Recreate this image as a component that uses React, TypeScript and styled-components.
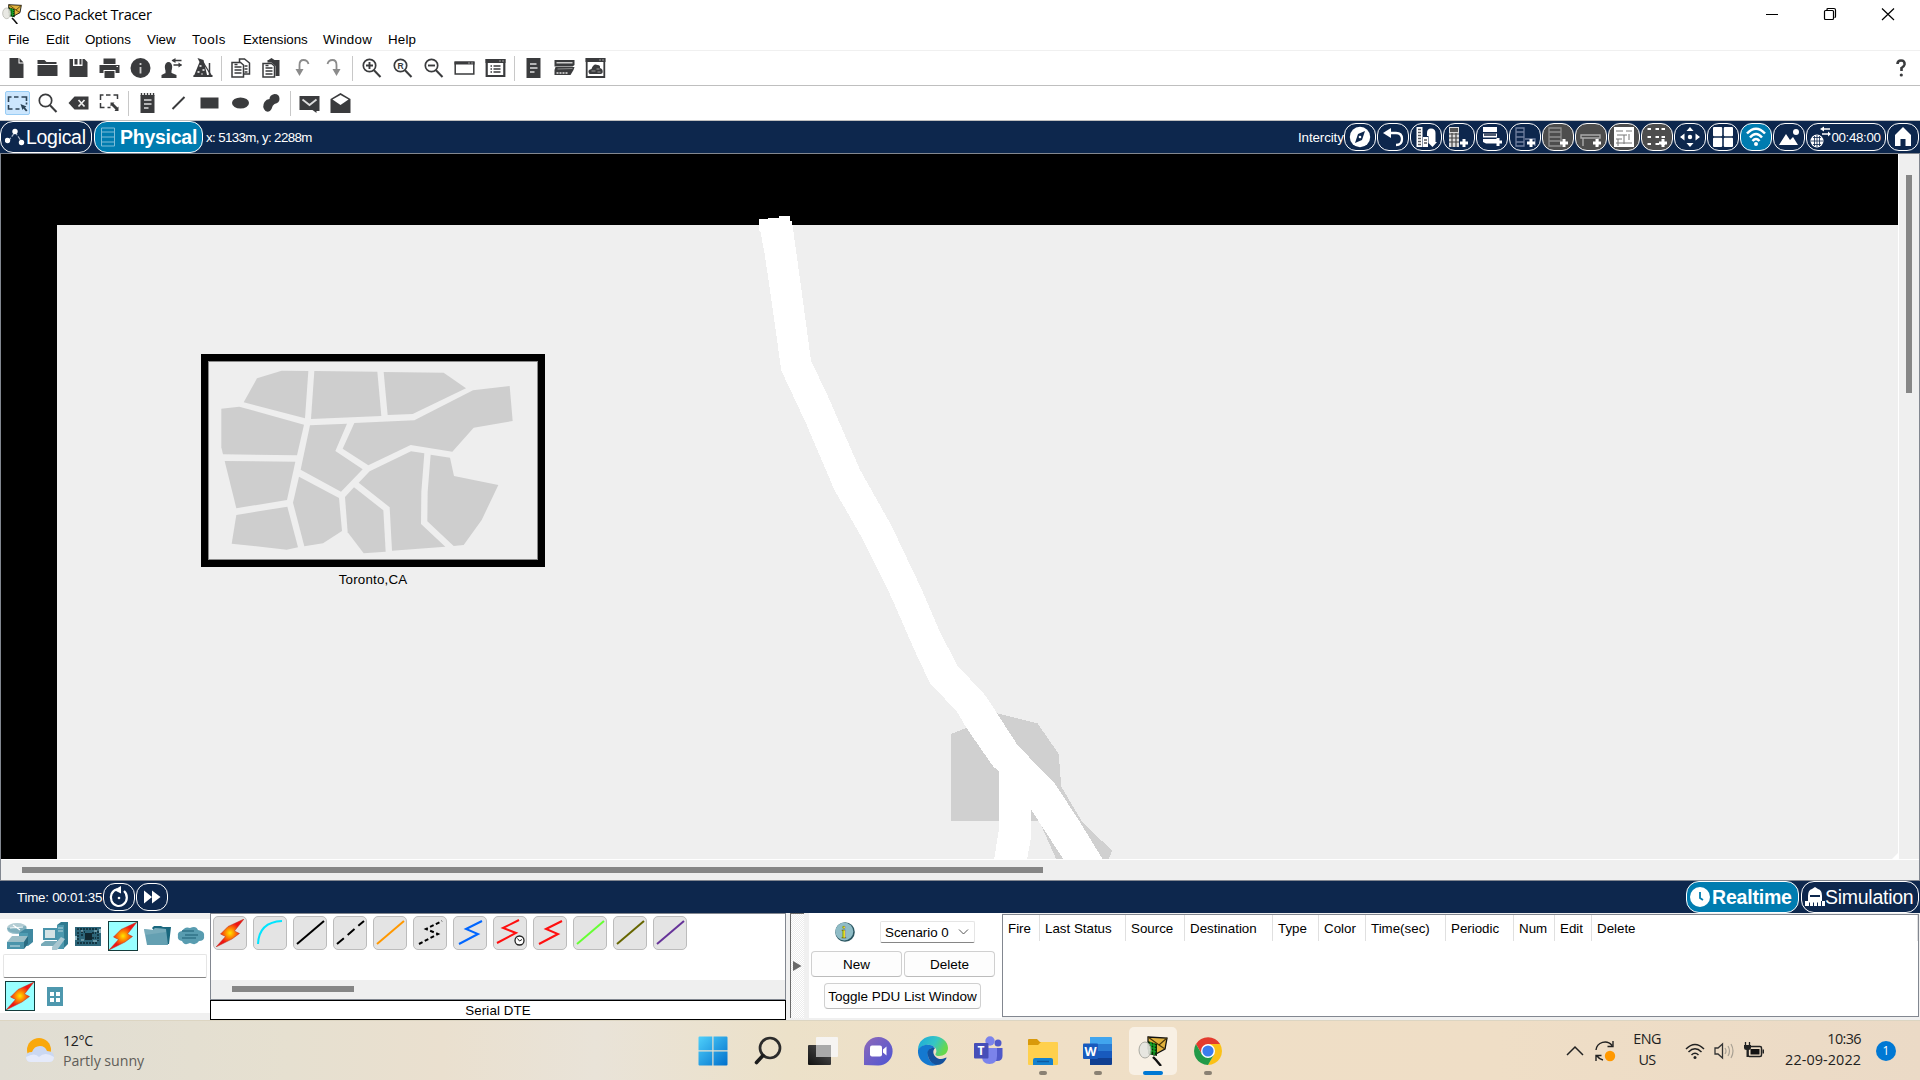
import React from "react";
import styled, { createGlobalStyle } from "styled-components";

const navy = "#0d274d";
const ink = "#3a3b3d";
const teal = "#007cb0";

const Global = createGlobalStyle`
  * { box-sizing: border-box; }
  html, body { margin: 0; padding: 0; overflow: hidden; }
  body { font-family: "Liberation Sans", Arial, sans-serif; font-size: 13.33px; color: #000; }
  svg { display: block; flex: none; }
`;

const Screen = styled.div`
  width: 1920px; height: 1080px; display: flex; flex-direction: column; background: #fff; overflow: hidden;
`;
const TitleBar = styled.header`
  height: 28px; display: flex; align-items: center; padding: 0 24px 0 2px; gap: 5px; flex: none;
`;
const Title = styled.span`
  font: 14.6px "Open Sans", "Noto Sans", sans-serif; letter-spacing: -0.36px; flex: 1; white-space: nowrap;
`;
const WindowButtons = styled.div`display: flex; gap: 42px; align-items: center;`;
const MenuBar = styled.nav`
  height: 23px; display: flex; align-items: center; padding: 2px 0 0 8px; gap: 16px; border-bottom: 1px solid #f0f0f0; flex: none;
`;
const MenuItem = styled.span<{ $w: number; $ls: number }>`
  width: ${p => p.$w}px; white-space: nowrap; letter-spacing: ${p => p.$ls}px; line-height: 16px;
`;
const ToolBar = styled.div<{ $pl: number }>`
  height: 35px; display: flex; align-items: center; border-bottom: 1px solid #bfbfbf; padding: 0 4px 0 ${p => p.$pl}px; flex: none;
`;
const Tool = styled.div<{ $on?: boolean }>`
  width: 25px; height: 24px; margin: 0 ${p => (p.$on ? 2 : 3)}px 0 3px; display: flex; align-items: center; justify-content: center;
  border-radius: 2px; border: 1px solid ${p => (p.$on ? "#99cdf5" : "transparent")};
  background: ${p => (p.$on ? "#cce6fd" : "transparent")};
`;
const ToolSep = styled.div`width: 1px; height: 25px; margin: 0 3px; background: #c8c8c8;`;
const Spring = styled.div`flex: 1;`;
const Gap = styled.div<{ $w: number }>`flex: 0 0 ${p => p.$w}px;`;

const NavBar = styled.div`
  height: 32px; background: ${navy}; color: #fff; display: flex; align-items: center; flex: none;
`;
const ModeButton = styled.div<{ $w: number; $on?: boolean; $pl?: number }>`
  width: ${p => p.$w}px; height: 32px; border: 1px solid #fff; border-radius: 13px; display: flex; align-items: center;
  padding: 0 0 0 ${p => p.$pl ?? 4}px; white-space: nowrap; background: ${p => (p.$on ? teal : navy)};
  font-size: 19.5px; font-weight: ${p => (p.$on ? 700 : 400)};
`;
const Round = styled.div<{ $w?: number; $bg?: string }>`
  width: ${p => p.$w || 32}px; height: 28px; border: 1px solid #fff; border-radius: 12px; margin-right: 1px;
  display: flex; align-items: center; justify-content: center; background: ${p => p.$bg || navy}; overflow: hidden;
`;
const NavText = styled.span<{ $w: number; $ls?: number }>`
  width: ${p => p.$w}px; white-space: nowrap; letter-spacing: ${p => p.$ls || 0}px; color: #fff;
`;

const Workspace = styled.main`
  height: 728px; border: 1px solid #828790; background: #efefef; display: grid; flex: none;
  grid-template-columns: 1897px 1fr; grid-template-rows: 705px 1fr;
`;
const Canvas = styled.div`position: relative; background: #000; overflow: hidden;`;
const City = styled.div`
  position: absolute; left: 200px; top: 200px; width: 344px; height: 213px; border: 7px solid #000; background: #eee;
`;
const CityLabel = styled.div`
  position: absolute; left: 200px; top: 418px; width: 344px; text-align: center; letter-spacing: 0.2px;
`;
const VScroll = styled.div`border-left: 1px solid #fff; display: flex; padding: 21px 0 0 7px;`;
const VThumb = styled.div`width: 6px; height: 218px; background: #868686;`;
const HScroll = styled.div`grid-column: 1 / 3; border-top: 1px solid #fff; padding: 7px 0 0 21px;`;
const HThumb = styled.div<{ $w: number }>`width: ${p => p.$w}px; height: 6px; background: #868686;`;

const Bottom = styled.section`height: 107px; display: flex; background: #f0f0f0; flex: none;`;
const Palette = styled.div`
  width: 210px; height: 94px; margin-top: 6px; background: #fff; display: flex; flex-direction: column;
`;
const PaletteRow = styled.div<{ $pl: number; $gap: number }>`
  display: flex; align-items: center; height: 34px; padding-left: ${p => p.$pl}px; gap: ${p => p.$gap}px;
`;
const SearchField = styled.div`
  height: 24px; margin: 1px 3px 1px; border: 1px solid #e5e5e5; border-bottom: 1px solid #868686; border-radius: 2px;
`;
const BoltBox = styled.div`
  width: 30px; height: 30px; border: 1px solid #133c3c; background: #99ffff; display: flex; align-items: center; justify-content: center;
`;
const Center = styled.div`width: 576px; display: flex; flex-direction: column;`;
const Cables = styled.div`
  height: 87px; border: 1px solid #828790; background: #fff; display: flex; flex-direction: column;
`;
const CableRow = styled.div`display: flex; gap: 6px; padding: 2px; flex: 1;`;
const Cable = styled.div`
  width: 34px; height: 34px; border: 1px solid #bcbcbc; border-radius: 5px; background: #e4e4e4;
  display: flex; align-items: center; justify-content: center;
`;
const CableScroll = styled.div`height: 19px; background: #efefef; padding: 6px 0 0 21px;`;
const CableName = styled.div`
  height: 20px; border: 1px solid #000; background: #fff; text-align: center; line-height: 19px; letter-spacing: 0.1px;
`;
const Splitter = styled.div`
  width: 14px; height: 105px; margin: 0 5px 0 4px; border-left: 1px solid #696969; border-top: 1px solid #696969;
  background: repeating-conic-gradient(#fff 0 25%, #ececec 0 50%) 0 0 / 2px 2px; display: flex; align-items: center; padding-left: 2px;
`;
const Scenario = styled.div`
  width: 193px; height: 105px; background: #fff; display: flex; flex-direction: column; padding: 8px 5px 0 2px;
`;
const ScenarioTop = styled.div`height: 22px; display: flex; align-items: center; padding-left: 24px; gap: 25px; margin-bottom: 8px;`;
const Combo = styled.div`
  width: 95px; height: 22px; border: 1px solid #e5e5e5; border-bottom-color: #868686; border-radius: 2px;
  display: flex; align-items: center; justify-content: space-between; padding: 0 5px 0 4px; white-space: nowrap;
`;
const Buttons = styled.div`display: flex; gap: 2px;`;
const Push = styled.button<{ $w: number }>`
  width: ${p => p.$w}px; height: 26px; border: 1px solid #d0d0d0; border-bottom-color: #bcbcbc; border-radius: 4px; background: #fdfdfd;
  font: 13.5px "Liberation Sans", Arial, sans-serif; padding: 0; white-space: nowrap; color: #000;
`;
const ToggleRow = styled.div`display: flex; padding: 6px 0 0 13px;`;
const PduTable = styled.div`
  width: 917px; height: 103px; margin-top: 1px; background: #fff; border: 1px solid #828790; display: flex;
`;
const PduHead = styled.div<{ $w: number; $ls?: number }>`
  width: ${p => p.$w}px; height: 26px; border-right: 1px solid #e0e0e0; padding: 6px 0 0 5px; white-space: nowrap; letter-spacing: ${p => p.$ls || 0}px;
`;

const TaskBar = styled.footer`
  height: 60px; display: flex; align-items: center; position: relative; flex: none; border-top: 1px solid #dcd5c2;
  background: linear-gradient(90deg, #e0ddd3 0, #e6e0d0 15%, #eae0cf 23%, #e9e3d8 31%, #ece1c9 41%, #efdfc6 52%, #efdec6 78%, #ebdac6 100%);
  font-family: "Open Sans", "Noto Sans", sans-serif; color: #1f1f1f;
`;
const Weather = styled.div`display: flex; align-items: center; padding-left: 25px; gap: 8px; width: 689px;`;
const WeatherText = styled.div`
  font-size: 14.2px; line-height: 20px; letter-spacing: -0.35px; span { display: block; color: #5f5d58; letter-spacing: -0.04px; }
`;
const Apps = styled.div`display: flex; gap: 7px; width: 560px;`;
const AppTile = styled.div<{ $on?: boolean }>`
  width: 48px; height: 48px; border-radius: 5px; background: ${p => (p.$on ? "#f8f0e4" : "transparent")};
  display: flex; flex-direction: column; align-items: center; padding-top: 9px; gap: 5px;
`;
const Dot = styled.div<{ $on?: boolean }>`
  width: ${p => (p.$on ? 20 : 8)}px; height: 4px; border-radius: 2px; background: ${p => (p.$on ? "#0078d4" : "#8a8173")};
`;
const Tray = styled.div`display: flex; align-items: center; flex: 1; padding-right: 24px; justify-content: flex-end;`;
const TrayText = styled.div<{ $w: number; $align: string }>`
  width: ${p => p.$w}px; text-align: ${p => p.$align}; font-size: 14.4px; line-height: 20.5px; letter-spacing: -0.6px;
  white-space: nowrap; padding-bottom: 2px;
`;
const DateLine = styled.span`display: block; letter-spacing: 0.08px;`;
const Badge = styled.div`
  width: 20px; height: 20px; border-radius: 50%; background: #0078d4; color: #fff; font-size: 12px; line-height: 20px; text-align: center; margin-left: 15px;
`;

type IcoProps = { w?: number; h?: number; children: React.ReactNode; color?: string };
/* Icons are drawn around their own centre. */
const Ico = ({ w = 22, h = 22, children, color = ink }: IcoProps) => (
  <svg width={w} height={h} viewBox={`${-w / 2} ${-h / 2} ${w} ${h}`} fill={color}>{children}</svg>
);

const PacketLogo = ({ size = 28 }: { size?: number }) => (
  <svg width={size} height={size} viewBox="0 0 28 30">
    <path d="M9 1L28 2L26 13L15 19L9 13Z" fill="#e2b23c" stroke="#111" strokeWidth="1.3" />
    <path d="M9 1L20 9L28 2M20 9L26 13" fill="none" stroke="#4a3608" strokeWidth="1.2" />
    <path d="M9 5L18 8V20L9 18Z" fill="#0a2d08" />
    <path d="M10 8l7 2M10 11l7 2M10 14l7 2M12 6v12M15 7v12" stroke="#17b32b" strokeWidth="1.3" />
    <ellipse cx="6" cy="14" rx="6" ry="8" fill="#e6e6e0" stroke="#a3a39b" opacity=".9" />
    <path d="M14 21l3 3 5 6" stroke="#111" strokeWidth="2.4" fill="none" />
  </svg>
);

const Bolt = () => (
  <svg width="28" height="28" viewBox="0 0 28 28">
    <defs>
      <radialGradient id="spark">
        <stop offset="0" stopColor="#ffe600" /><stop offset=".3" stopColor="#ff8f00" /><stop offset=".75" stopColor="#f01414" />
      </radialGradient>
    </defs>
    <path d="M28 0L18.5 12L23.5 14.500L16 20L0 28L9.500 17.500L4.500 15L12 7.500Z" fill="url(#spark)" stroke="#b83222" strokeWidth=".5" />
  </svg>
);

const lens = (
  <><circle cx="-2" cy="-2.5" r="6.2" fill="none" stroke={ink} strokeWidth="1.7" /><path d="M2.5 2.2L9 9" stroke={ink} strokeWidth="2" /></>
);
const page = (
  <><path d="M-7 -10H2V-4.500H7V10H-7Z" /><path d="M3 -10L7 -5.500H3Z" /></>
);
const mainTools: (React.ReactNode | null)[] = [
  page,
  <><path d="M-10 -8H-3L-1 -6H9V-4H-10Z" /><path d="M-10 -3H10V8H-10Z" /></>,
  <><path d="M-9 -9H-5.500V-2H4V-9H6L9 -6V9H-9Z" /><path d="M-4 -9H-1V-3.500H-4ZM1 -9H3V-3.500H1Z" /></>,
  <><path d="M-6 -9.500H6V-4H-6ZM-10 -3H10V5H6V2H-6V5H-10Z" /><path d="M-5 3H5V10H-5Z" /><path d="M7 -1.500h1.500" stroke="#fff" /></>,
  <><circle r="10" /><path d="M0 -5v2M0 -1v6.500" stroke="#ccc" strokeWidth="1.800" /></>,
  <><ellipse cx="-3" cy="-1" rx="3.700" ry="5" /><path d="M-10 10V7L-5 4.500H-1L5 7V10ZM-6 1h6v6h-6Z" /><path d="M1 -7.500H10M2 -3H10" stroke={ink} strokeWidth="1.500" /><path d="M4 -10V-5L0 -7.500ZM7 -5.500V-.5L10.500 -3Z" /></>,
  <><path d="M-5 -10L1 -8L5 9H-9L-3 -6Z" /><path d="M-9 7H10V9H-9Z" /><path d="M1 -5L9 8" stroke={ink} strokeWidth="1.300" /><path d="M7 -5V8" stroke={ink} strokeWidth="1.500" /><path d="M-3 -2h2M0 2h2M-5 4h2M-1 6h1" stroke="#fff" strokeWidth="1.500" /></>,
  null,
  <><path d="M-1 -9H4L9 -5V6H-1Z" fill="#fff" stroke={ink} strokeWidth="1.500" /><path d="M-8.500 -5.500H0L3 -3V9H-8.500Z" fill="#fff" stroke={ink} strokeWidth="1.500" /><path d="M-6 -1H1M-6 2H1M-6 5H1M4 -2H7M4 1H7M4 4H7M-6 -3.500h3" stroke={ink} strokeWidth="1.300" /></>,
  <><path d="M-3 -8L0 -10L3 -8H8V8H4V-2L0 -5.500H-4V-8Z" /><path d="M-8.500 -4.500H0L3 -2V9H-8.500Z" fill="#fff" stroke={ink} strokeWidth="1.500" /><path d="M-6 0H1M-6 3H1M-6 6H1M-6 -2.500h3" stroke={ink} strokeWidth="1.300" /></>,
  <><path d="M6 -4Q5 -8 1 -8Q-3 -8 -3 -3V3" fill="none" stroke="#8b8b8b" strokeWidth="1.800" /><path d="M-7 1H1L-3 8Z" fill="#8b8b8b" /></>,
  <><path d="M-6 -4Q-5 -8 -1 -8Q3 -8 3 -3V3" fill="none" stroke="#8b8b8b" strokeWidth="1.800" /><path d="M-1 1H7L3 8Z" fill="#8b8b8b" /></>,
  null,
  <>{lens}<path d="M-5.500 -2.500H1.500M-2 -6V1" stroke={ink} strokeWidth="1.900" /></>,
  <>{lens}<text x="-5" y="0.500" fontSize="8.500" fontWeight="700" fontFamily="Liberation Sans">R</text></>,
  <>{lens}<path d="M-5.500 -2.500H1.500" stroke={ink} strokeWidth="1.900" /></>,
  <><path d="M-9.300 -5.800H9.300V6H-9.300Z" fill="none" stroke={ink} strokeWidth="1.500" /><path d="M-10 -6.500H10V-3.500H-10Z" /><path d="M4 -5h1M7 -5h1" stroke="#fff" /></>,
  <><path d="M-8.800 -7.800H8.800V8H-8.800Z" fill="none" stroke={ink} strokeWidth="2.200" /><path d="M-10 -9H10V-5H-10Z" /><path d="M4 -7h1M7 -7h1" stroke="#fff" /><path d="M-5 -2h1.500M-2 -2H5M-5 1h1.500M-2 1H5M-5 4h1.500M-2 4H5" stroke={ink} strokeWidth="1.500" /></>,
  null,
  <><path d="M-7 -10H7V10H-7Z" /><path d="M-3.500 -4H3M-3.500 0H4M-3.500 4H1" stroke="#ddd" strokeWidth="1.600" /></>,
  <><path d="M-10 -8H10V-3L8 -1.500H-10Z" /><path d="M-8 -6H8V-4.500H-8Z" fill="#ccc" /><path d="M-9 -1H10L9 2L6 7H-10V2Z" /><path d="M-8 5h2M-5 5h2M-2 5h2M1 5h2" stroke="#bbb" strokeWidth="2" /><path d="M-7 1L8 .5" stroke="#888" /></>,
  <><path d="M-8.800 -8.800H8.800V9H-8.800Z" fill="#fff" stroke={ink} strokeWidth="1.800" /><path d="M-10 -10H10V-6H-10Z" /><path d="M4 -8h1M7 -8h1" stroke="#fff" /><path d="M-6 6Q-9 2 -4 1Q-2 -5 2 -3Q5 -3 4.500 0Q8 1 7 5Q6 6 5 6Z" /><path d="M-4 3h4M1 1h3M2 4h3" stroke="#999" strokeWidth="1.200" /></>,
];
const drawTools: (React.ReactNode | null)[] = [
  <><path d="M-9 -1V-6H-6M-3.500 -6H1M4 -6H9V-2M-9 2V6H-5M-2 6H2M9 -.5V1.500" fill="none" stroke="#2c4356" strokeWidth="1.600" /><path d="M3 1L9 3.500L7.500 4.500L10 7.500L8.500 8.500L6 5.500L5 7Z" fill="#2c4356" /></>,
  lens,
  <><path d="M-10 0L-4 -6.500H10V6.500H-4Z" /><path d="M0 -3L6 3.500M6 -3L0 3.500" stroke="#eee" strokeWidth="1.700" /></>,
  <><path d="M-9 -3V-8H-6M-3.500 -8H1M4 -8H8V-4M-9 0V4.500H-5M-2 4.500H1" fill="none" stroke={ink} strokeWidth="1.500" /><path d="M1 -.5H5L4 .5L8 4.500L9 3.500V8H5L6 6.500L2 2.500L1 3.500Z" /></>,
  null,
  <><path d="M-7 -8H7V10H-7Z" /><path d="M-6 -10v3M-3 -10v3M0 -10v3M3 -10v3M6 -10v3" stroke={ink} strokeWidth="1.400" /><path d="M-3.500 -3H4M-3.500 1H4M-3.500 5H1" stroke="#ddd" strokeWidth="1.500" /></>,
  <path d="M-6 6L6 -6" stroke={ink} strokeWidth="2" />,
  <path d="M-9 -5.500H9V5.500H-9Z" />,
  <ellipse rx="8.500" ry="5.500" />,
  <path d="M3 -9Q8 -9 8 -4Q8 0 3 1Q1 2 0 6Q-2 10 -6 8Q-10 4 -7 -1Q-5 -4 -2 -4Q-2 -8 3 -9Z" />,
  null,
  <><path d="M-10 -7H10V8H7V10L3 7H-10Z" /><path d="M-7 -3.500L0 2L7 -3.500" fill="none" stroke="#ddd" strokeWidth="1.800" /></>,
  <><path d="M-10 10V-4L0 -10L10 -4V10Z" /><path d="M-8 -3.500L0 -8L8 -3.500L0 2Z" fill="#fff" /></>,
];

const plus = (x: number, y: number) => <path d={`M${x - 4} ${y}h8M${x} ${y - 4}v8`} stroke="#fff" strokeWidth="3" />;
const navTools: { bg?: string; art: React.ReactNode }[] = [
  { art: <><circle r="10.200" /><path d="M5 -6L2 3L-5 6L-2 -3Z" fill={navy} /><circle r="1.300" fill="#fff" /></> },
  { art: <><path d="M-3 -4H3Q9 -4 9 2Q9 8 3 8" fill="none" stroke="#fff" strokeWidth="2.300" /><path d="M-10 -4L-2 -9V1Z" /></> },
  { art: <><path d="M-9.500 -10H-3.500V10H-9.500ZM-3 0H2V10H-3Z" /><path d="M-8 -7.500h3M-8 -4.500h3M-8 -1.500h3M-8 1.500h3M-8 4.500h3M-8 7.500h3M-2 3h3M-2 6h3" stroke="#55585f" strokeWidth="1.300" /><path d="M1 -1V-4Q1 -8.500 5 -8.500Q9.500 -8.500 9.500 -4V5H11L6.500 10L2.500 6V-1Z" /></> },
  { art: <><path d="M-10 -10H0V10H-10Z" fill="#ddd" /><path d="M-9 -9H-1V-5H-9Z" fill="#555" /><path d="M-10 -3H0M-10 1H0M-10 5H0M-7 -4V10M-3 -4V10" stroke="#444" strokeWidth="1.200" />{plus(5, 6)}</> },
  { art: <><path d="M-9 -10H5V-5H-9ZM-9 -3.500H5V.5H-9ZM-9 2H5V5H-9Z" /><path d="M-8 -4H4V-1H-8Z" fill="#4d5a70" /><path d="M-9 5H2V6.500H-6Z" />{plus(6, 5)}</> },
  { art: <><path d="M-9 -9H-1V9H-9ZM-9 -5H-1M-9 0H-1M-9 5H-1M0 2H10V9" fill="none" stroke="#7181a0" strokeWidth="1.300" />{plus(6, 6)}</> },
  { bg: "#4d4d4d", art: <><path d="M-9 -9H3V9H-9ZM-9 -5H3M-9 0H3M-9 4H3" fill="none" stroke="#8e8e8e" strokeWidth="1.300" />{plus(6, 6)}</> },
  { bg: "#4d4d4d", art: <><path d="M-10 -2H9V1H-10ZM-8 1V9M7 1V9" fill="none" stroke="#aaa" strokeWidth="1.400" />{plus(6, 6)}</> },
  { bg: "#4d4d4d", art: <><path d="M-10 -10H10V10H-10Z" /><path d="M-8 -6H-1M2 -6H8M-7 -2H3M5 -3V3M-8 2H-2M0 -2V7M-8 6H8M-6 2V9" stroke="#777" /></> },
  { bg: "#4d4d4d", art: <>{[-8, 0, 6].map(x => [-8, 0, 7].map(y => <rect key={`${x}${y}`} x={x - 1.5} y={y - 1} width="3.500" height="2" />))}{plus(6, 6)}</> },
  { art: <><path d="M0 -10L3.500 -6H-3.500ZM0 10L3.500 6H-3.500ZM-10 0L-5.500 -3.500V3.500ZM10 0L5.500 -3.500V3.500Z" /><circle r="2.200" /></> },
  { art: <><rect x="-10" y="-10" width="9.200" height="9.200" rx="1" /><rect x=".8" y="-10" width="9.200" height="9.200" rx="1" /><rect x="-10" y=".8" width="9.200" height="9.200" rx="1" /><rect x=".8" y=".8" width="9.200" height="9.200" rx="1" /></> },
  { bg: teal, art: <><path d="M-9 -3.500Q0 -13 9 -3.500M-6 .5Q0 -6.500 6 .5M-3.500 4Q0 0 3.500 4" fill="none" stroke="#fff" strokeWidth="2.500" /><circle cy="7" r="2" /></> },
  { art: <><path d="M-10 8L-3 -3L1 3L4 0L9 8Z" /><circle cx="7" cy="-5" r="3" /></> },
];

const Router = () => (
  <svg width="29" height="28" viewBox="0 0 29 28">
    <ellipse cx="11" cy="6" rx="10" ry="5" fill="#b2ccd3" /><path d="M1 6Q1 12 11 12Q20 12 20 6V4Z" fill="#6aa3b3" opacity=".7" />
    <path d="M4 6L17 5M7 3L14 8" stroke="#fff" strokeWidth="1.200" />
    <path d="M13 11L19 7H27V20L22 24H13Z" fill="#3f88a0" /><path d="M13 11H22V24H13Z" fill="#4f9cb2" />
    <path d="M1 20L6 14H22L18 20Z" fill="#9dbfc8" /><path d="M1 20H18V27H1Z" fill="#4a94ab" /><path d="M18 20L22 14V22L18 27Z" fill="#2a6c82" /><path d="M4 24h10" stroke="#cfe2e8" />
  </svg>
);
const Pc = () => (
  <svg width="28" height="28" viewBox="0 0 28 28">
    <path d="M16 3L20 0H27V22L22 27H16Z" fill="#2f7a90" /><path d="M16 3H23V27H16Z" fill="#4b98ae" /><path d="M17 6h5M17 9h5" stroke="#bcd6dd" />
    <path d="M2 6H16V18H2Z" fill="#4a94ab" /><path d="M4 8H14V16H4Z" fill="#d5e3e5" /><path d="M0 22L4 19H19L16 24H0Z" fill="#78aab8" />
    <path d="M11 25L20 15L24 17L16 28H11Z" fill="#a9c7d0" />
  </svg>
);
const Board = () => (
  <svg width="27" height="21" viewBox="0 0 27 21">
    <path d="M0 1H26V20H0Z" fill="#2d6579" /><path d="M2 3h20M2 17h21M3 6v9M23 5v10M6 6h4M6 9h3M17 7h4M17 12h4" stroke="#133542" strokeWidth="1.800" strokeDasharray="2 1" />
    <path d="M6 5h2M18 15h4M19 5h3M6 14h3" stroke="#a5c8d2" /><path d="M10 7H17V14H10Z" fill="#112730" /><path d="M25 3v4M1 10v4" stroke="#92b9c4" strokeWidth="2" />
  </svg>
);
const Folder = () => (
  <svg width="27" height="20" viewBox="0 0 27 20">
    <path d="M8 2L10 0H17L19 1H27L25 18H20Z" fill="#19677e" /><path d="M0 3L9 4L11 2L22 3L24 19H3Z" fill="#64a0b2" /><path d="M0 3L9 4L11 2L22 3L22 6L1 9Z" fill="#8cb8c4" opacity=".5" />
  </svg>
);
const CloudIco = () => (
  <svg width="28" height="20" viewBox="0 0 28 20">
    <path d="M5 15Q0 14 1 10Q0 6 5 5Q8 0 13 2Q19 -1 21 4Q28 5 27 10Q28 15 22 15Q19 20 13 17Q7 20 5 15Z" fill="#589cb0" />
    <path d="M5 5h12M8 9h13M5 12h14" stroke="#317388" strokeWidth="1.400" />
  </svg>
);
const Mods = () => (
  <svg width="16" height="19" viewBox="0 0 16 19"><path d="M0 0H16V19H0Z" fill="#4e98ae" />
    <path d="M3 5H7V9H3ZM9 5H13V9H9ZM3 11H7V15H3ZM9 11H13V15H9Z" fill="#fff" /></svg>
);

const cables: React.ReactNode[] = [
  <path key="c" d="M4 28Q5 6 28 5" stroke="#00e5ff" />,
  <path key="s" d="M3 28L30 5" stroke="#000" />,
  <path key="x" d="M3 28L30 5" stroke="#000" strokeDasharray="9 5" />,
  <path key="f" d="M3 28L30 5" stroke="#ff9800" />,
  <path key="p" d="M5 28L24 18L12 13L28 5" stroke="#000" strokeDasharray="4 2.500" />,
  <path key="b" d="M5 28L24 18L12 13L28 5" stroke="#0066ff" />,
  <g key="r"><path d="M3 27L22 17L9 12L25 4" stroke="#ff0f0f" /><circle cx="25.500" cy="24.500" r="4.500" fill="#fff" stroke="#222" strokeWidth="1.300" /><path d="M23.500 22.500L25.500 25L28 23.500" stroke="#222" strokeWidth="1" /></g>,
  <path key="r2" d="M5 28L24 18L12 13L28 5" stroke="#ff0f0f" />,
  <path key="g" d="M3 28L30 5" stroke="#66ff33" />,
  <path key="o" d="M3 28L30 5" stroke="#666600" />,
  <path key="v" d="M3 28L30 5" stroke="#663399" />,
];

const heads: [string, number][] = [
  ["Fire", 37], ["Last Status", 86], ["Source", 59], ["Destination", 88], ["Type", 46], ["Color", 47],
  ["Time(sec)", 80], ["Periodic", 68], ["Num", 41], ["Edit", 37], ["Delete", 326],
];
const menus: [string, number, number][] = [
  ["File", 22, 0], ["Edit", 23, 0.1], ["Options", 46, 0], ["View", 29, 0], ["Tools", 35, 0.6],
  ["Extensions", 64, -0.05], ["Window", 49, 0.3], ["Help", 30, 0.2],
];

const blocks = [
  "191,187 231,115 305,92 385,93 375,235", "403,93 592,95 604,228 393,237", "611,96 791,98 858,145 698,222 623,225",
  "124,206 178,200 372,254 351,346 129,343 124,322", "134,363 346,365 321,480 169,505",
  "169,525 322,500 354,622 320,629 155,611", "390,256 501,251 466,333 548,388 483,455 362,389",
  "523,249 703,241 879,151 989,138 998,243 881,263 817,335 692,315 565,376 488,326",
  "357,410 477,474 486,573 429,610 373,619 339,488", "495,471 522,442 610,511 617,635 551,640 503,577",
  "536,428 569,394 693,334 733,340 724,455 723,552 796,620 636,632 629,502", "752,344 810,353 822,408 955,435 905,540 851,615 821,618 742,544 743,455",
];

const IntercityMap = () => (
  <svg width="1897" height="705" viewBox="1 154 1897 705">
    <rect x="57" y="225" width="1841" height="634" fill="#efefef" />
    <g transform="translate(740 200.500) scale(.33333 .4273)" shapeRendering="crispEdges">
      <polygon fill="#d0d0d0" points="634,1248 680,1234 772,1200 893,1224 956,1295 964,1372 1025,1452 1116,1522 1105,1544 950,1544 897,1451 634,1451" />
      <polygon fill="#fff" points="57,44 84,44 84,40 117,40 117,37 150,37 150,48 156,48 165,100 188,230 213,375 262,455 360,630 455,762 545,910 600,1010 652,1088 738,1160 775,1205 833,1275 945,1365 1020,1455 1090,1544 972,1544 873,1425 873,1490 861,1544 762,1544 777,1470 777,1335 760,1325 680,1235 650,1195 570,1130 522,1050 455,930 370,795 283,677 200,525 124,398 100,265 75,130 62,75 57,70" />
    </g>
    <path d="M1898 853L1892 859H1898Z" fill="#fff" />
  </svg>
);

const appIcons: { art: React.ReactNode; state?: "open" | "active" }[] = [
  { art: <svg width="30" height="30" viewBox="0 0 30 30"><defs><linearGradient id="win" x1="0" y1="0" x2="1" y2="1" gradientUnits="objectBoundingBox"><stop stopColor="#4fd0fb" /><stop offset="1" stopColor="#0070cc" /></linearGradient></defs><path d="M.5 1.500a1 1 0 011-1H14.300V14.300H.5ZM15.500 .5H28.500a1 1 0 011 1V14.300H15.500ZM.5 15.500H14.300V29.500H1.500a1 1 0 01-1-1ZM15.500 15.500H29.500V28.500a1 1 0 01-1 1H15.500Z" fill="url(#win)" /></svg> },
  { art: <svg width="30" height="30" viewBox="0 0 30 30"><circle cx="17" cy="12" r="10" fill="none" stroke="#2c2c2c" strokeWidth="2.700" /><path d="M10 19.500L3.500 26.500" stroke="#1c1c1c" strokeWidth="3.600" strokeLinecap="round" /></svg> },
  { art: <svg width="30" height="30" viewBox="0 0 30 30"><defs><linearGradient id="tv" x1="0" y1="1" x2="1" y2="0"><stop stopColor="#111" /><stop offset="1" stopColor="#555" /></linearGradient></defs><rect y="9" width="23" height="20" rx="1" fill="url(#tv)" /><rect x="8" y="1" width="22" height="20" rx="1" fill="#f6f4f2" /><rect x="8" y="9" width="15" height="12" fill="#a9a9a9" /></svg> },
  { art: <svg width="30" height="30" viewBox="0 0 30 30"><defs><linearGradient id="chat" x1="0" y1="0" x2="1" y2="1"><stop stopColor="#8e69b8" /><stop offset="1" stopColor="#4d55d4" /></linearGradient></defs><path d="M1 29V15A14.300 14.300 0 1115 29.500Z" fill="url(#chat)" /><rect x="7" y="9.500" width="12" height="11" rx="2" fill="#fff" /><path d="M20 13.500L23.500 10.500V19.500L20 16.500Z" fill="#fff" /></svg> },
  { art: <svg width="30" height="30" viewBox="0 0 30 30"><defs><linearGradient id="e1" x1="0" y1="0" x2="1" y2=".4"><stop stopColor="#1ba7dd" /><stop offset=".6" stopColor="#36c6c4" /><stop offset="1" stopColor="#66d84c" /></linearGradient></defs><path d="M0 14C0 5 7 0 15 0C24 0 30 6 30 12C30 17 26 20 21 20C17 20 17 18 18 17C21 10 8 4 0 14Z" fill="url(#e1)" /><path d="M0 14C3 8 14 7 17 12C13 11 9 15 10 20C11 26 17 29 22 28C11 33 -1 26 0 14Z" fill="#1479d0" /><path d="M10 20C8 15 12 11 17 12C12 17 19 26 27 22C30 20 28 24 25 27C18 32 11 26 10 20Z" fill="#14519c" /></svg> },
  { art: <svg width="30" height="30" viewBox="0 0 30 30"><circle cx="25" cy="7" r="3.500" fill="#5059c9" /><circle cx="17" cy="5" r="4.700" fill="#7b83eb" /><path d="M20 12H29.500V20Q29.500 25 24 25H20Z" fill="#5059c9" /><path d="M9 12H24V20Q24 28 16.500 28Q9 28 9 20Z" fill="#7b83eb" /><rect x="1" y="7" width="14.500" height="15.500" rx="1" fill="#464eb8" /><text x="4.500" y="19" fontFamily="Open Sans" fontSize="12" fontWeight="700" fill="#fff">T</text></svg> },
  { state: "open", art: <svg width="30" height="30" viewBox="0 0 30 30"><path d="M0 4a1 1 0 011-1H9L12 6H29V12H0Z" fill="#d99a0b" /><path d="M0 9H10L13 6H29a1 1 0 011 1V28a1 1 0 01-1 1H1a1 1 0 01-1-1Z" fill="#ffd04d" /><path d="M5 29V24Q5 22 7 22H23Q25 22 25 24V29Z" fill="#1481cf" /><path d="M9 25.500H21" stroke="#0d5ba2" strokeWidth="1.500" /></svg> },
  { state: "open", art: <svg width="30" height="30" viewBox="0 0 30 30"><path d="M7 1H28a1 1 0 011 1V8H7Z" fill="#41a5ee" /><path d="M7 8H29V15H7Z" fill="#2b7cd3" /><path d="M7 15H29V22H7Z" fill="#185abd" /><path d="M7 22H29V28a1 1 0 01-1 1H7Z" fill="#103f91" /><rect x="0" y="7.500" width="15" height="15.500" rx="1" fill="#185abd" /><text x="1.500" y="19.500" fontFamily="Open Sans" fontSize="12.500" fontWeight="700" fill="#fff">W</text></svg> },
  { state: "active", art: <PacketLogo size={30} /> },
  { state: "open", art: <svg width="30" height="30" viewBox="-15 -15 30 30"><path d="M-12 -7A14 14 0 0112.100 -7H0L-6 3.500Z" fill="#e33b2e" /><path d="M12.100 -7A14 14 0 010 14L6 3.500L0 -7Z" fill="#fbc116" /><path d="M0 14A14 14 0 01-12.100 -7L-6 3.500L6 3.500Z" fill="#229a48" /><circle r="7" fill="#fff" /><circle r="5.600" fill="#3b7ded" /></svg> },
];

const renderTools = (list: (React.ReactNode | null)[], active?: number) =>
  list.map((art, i) => (art === null ? <ToolSep key={i} /> : <Tool key={i} $on={i === active}><Ico w={23}>{art}</Ico></Tool>));

export default function App() {
  return (
    <Screen>
      <Global />
      <TitleBar>
        <PacketLogo size={20} />
        <Title>Cisco Packet Tracer</Title>
        <WindowButtons>
          <svg width="16" height="16" viewBox="0 0 16 16"><path d="M2 8.500H14" stroke="#000" /></svg>
          <svg width="16" height="16" viewBox="0 0 16 16" fill="none" stroke="#000" strokeWidth="1.200"><rect x="2.500" y="4.500" width="9" height="9" rx="1" /><path d="M5 4V3.500Q5 2.500 6 2.500H12Q13.500 2.500 13.500 4V10.500Q13.500 11.500 12.500 11.500" /></svg>
          <svg width="16" height="16" viewBox="0 0 16 16"><path d="M2 2.500L14 14M14 2.500L2 14" stroke="#000" strokeWidth="1.200" /></svg>
        </WindowButtons>
      </TitleBar>
      <MenuBar>{menus.map(([m, w, ls]) => <MenuItem key={m} $w={w} $ls={ls}>{m}</MenuItem>)}</MenuBar>
      <ToolBar $pl={1}>
        {renderTools(mainTools)}
        <Spring />
        <Tool><Ico><path d="M-3.500 -4Q-3.500 -7.500 0 -7.500Q4 -7.500 3.500 -3.500Q3 -1.500 .5 0V3" fill="none" stroke={ink} strokeWidth="2.600" /><circle cx=".3" cy="7" r="1.600" /></Ico></Tool>
      </ToolBar>
      <ToolBar $pl={2}>{renderTools(drawTools, 0)}</ToolBar>

      <NavBar>
        <ModeButton $w={92}>
          <Ico w={21} h={20} color="#fff"><path d="M-7 4L-.5 -5L7 6" fill="none" stroke="#aab6c9" strokeWidth="1.200" strokeDasharray="4 1.500" /><circle cx="-8" cy="3.500" r="2.700" /><circle cx="-.5" cy="-5.500" r="2.700" /><circle cx="6" cy="5.500" r="2.700" /></Ico>
          <NavText $w={62} $ls={-0.3}>Logical</NavText>
        </ModeButton>
        <Gap $w={2} />
        <ModeButton $w={109} $on>
          <Ico w={21} h={20} color="#fff"><path d="M-8 -9H5V9H-8ZM-8 -5H5M-8 0H5M-8 5H5" fill="none" stroke="#7fbdd8" /></Ico>
          <NavText $w={78} $ls={-0.25}>Physical</NavText>
        </ModeButton>
        <Gap $w={3} />
        <NavText $w={120} $ls={-0.63}>x: 5133m, y: 2288m</NavText>
        <Spring />
        <NavText $w={46} $ls={-0.1}>Intercity</NavText>
        {navTools.map((t, i) => <Round key={i} $bg={t.bg}><Ico color="#fff">{t.art}</Ico></Round>)}
        <Round $w={80}>
          <Ico color="#fff"><circle cx="-4" cy="4" r="6.500" /><path d="M-10 4H2M-4 -2V10M-8 0.500H0M-8 7.500H0M-6.500 -1V9M-1.500 -1V9" stroke={navy} strokeWidth=".8" /><path d="M1 -8H9M1 -3H9" stroke="#fff" strokeWidth="1.500" /><path d="M3 -10.500V-5.500L-1 -8ZM7 -5.500V-.5L10 -3Z" /></Ico>
          <NavText $w={51} $ls={-0.35}>00:48:00</NavText>
        </Round>
        <Round><Ico color="#fff"><path d="M0 -10L8 -2V9H2.500V2H-2.500V9H-8V-2Z" /></Ico></Round>
      </NavBar>

      <Workspace>
        <Canvas>
          <IntercityMap />
          <City>
            <svg width="330" height="199" viewBox="84 63 990 597">
              <rect x="85.500" y="64.500" width="987" height="594" fill="#eee" stroke="#8a8a8a" strokeWidth="3" />
              {blocks.map(b => <polygon key={b} points={b} fill="#cecece" />)}
            </svg>
          </City>
          <CityLabel>Toronto,CA</CityLabel>
        </Canvas>
        <VScroll><VThumb /></VScroll>
        <HScroll><HThumb $w={1021} /></HScroll>
      </Workspace>

      <NavBar>
        <Gap $w={17} />
        <NavText $w={86} $ls={-0.23}>Time: 00:01:35</NavText>
        <Round><Ico color="#fff"><path d="M-2 -7.800A8 8.500 0 105 -6" fill="none" stroke="#fff" strokeWidth="2.200" /><path d="M-5 -7L2 -11V-3.500Z" /><circle cy="1" r="1.300" /></Ico></Round>
        <Round><Ico color="#fff"><path d="M-8 -6.500L0 0L-8 6.500ZM0 -6.500L8.500 0L0 6.500Z" /></Ico></Round>
        <Spring />
        <ModeButton $w={113} $on $pl={3}>
          <Ico w={20} h={20} color="#fff"><circle r="10" /><path d="M0 -5V1L3 3" fill="none" stroke={teal} strokeWidth="1.800" /></Ico>
          <Gap $w={2} />
          <NavText $w={80} $ls={-0.2}>Realtime</NavText>
        </ModeButton>
        <Gap $w={2} />
        <ModeButton $w={118} $pl={3}>
          <Ico w={20} h={20} color="#fff"><path d="M-7 -1Q-7 -7 -3 -8L0 -10L3 -8Q7 -7 7 -1V4H-7ZM-10 4H-6V9H-10ZM-5 5H-2V9H-5ZM-1 5H2V9H-1ZM3 5H6V9H3ZM7 4H10V9H7Z" /><path d="M-5 -1H5" stroke={navy} strokeWidth="2" /><path d="M-6 4H6" stroke="#fff" strokeWidth="3" /></Ico>
          <NavText $w={88} $ls={-0.27}>Simulation</NavText>
        </ModeButton>
        <Gap $w={1} />
      </NavBar>

      <Bottom>
        <Palette>
          <PaletteRow $pl={6} $gap={6}>
            <Router /><Pc /><Board /><BoltBox><Bolt /></BoltBox><Folder /><CloudIco />
          </PaletteRow>
          <SearchField />
          <PaletteRow $pl={5} $gap={12}><BoltBox><Bolt /></BoltBox><Mods /></PaletteRow>
        </Palette>
        <Center>
          <Cables>
            <CableRow>
              <Cable><Bolt /></Cable>
              {cables.map((c, i) => (
                <Cable key={i}><svg width="32" height="32" viewBox="0 1 32 32" fill="none" strokeWidth="2">{c}</svg></Cable>
              ))}
            </CableRow>
            <CableScroll><HThumb $w={122} /></CableScroll>
          </Cables>
          <CableName>Serial DTE</CableName>
        </Center>
        <Splitter><svg width="9" height="10" viewBox="0 0 9 10"><path d="M0 0L8.500 5L0 10Z" fill="#696969" /></svg></Splitter>
        <Scenario>
          <ScenarioTop>
            <svg width="20" height="20" viewBox="0 0 20 20"><circle cx="10" cy="10" r="9.800" fill="#2a5560" /><circle cx="9.300" cy="9.500" r="9" fill="#8fbcc6" /><text x="6.700" y="15.500" fontFamily="Liberation Serif" fontSize="16" fontWeight="700" fill="#f5e61c" stroke="#4a4a18" strokeWidth=".4">i</text></svg>
            <Combo>Scenario 0<svg width="11" height="8" viewBox="0 0 11 8"><path d="M1 1.500L5.500 6L10 1.500" fill="none" stroke="#555" /></svg></Combo>
          </ScenarioTop>
          <Buttons><Push $w={91}>New</Push><Push $w={91}>Delete</Push></Buttons>
          <ToggleRow><Push $w={157}>Toggle PDU List Window</Push></ToggleRow>
        </Scenario>
        <PduTable>{heads.map(([h, w]) => <PduHead key={h} $w={w}>{h}</PduHead>)}</PduTable>
      </Bottom>

      <TaskBar>
        <Weather>
          <svg width="30" height="28" viewBox="0 0 30 28"><circle cx="14" cy="13" r="12" fill="#f9a80c" /><path d="M6 25Q1 25 1 20Q1 15 7 15Q9 9 15 9Q20 9 22 14Q29 14 29 20Q29 25 24 25Z" fill="#cbd8f2" /><path d="M6 25Q1 25 1 20Q10 15 14 20Q20 14 29 20Q29 25 24 25Z" fill="#e5eafa" /></svg>
          <WeatherText>12°C<span>Partly sunny</span></WeatherText>
        </Weather>
        <Apps>
          {appIcons.map((a, i) => (
            <AppTile key={i} $on={a.state === "active"}>{a.art}{a.state && <Dot $on={a.state === "active"} />}</AppTile>
          ))}
        </Apps>
        <Tray>
          <svg width="18" height="12" viewBox="0 0 18 12"><path d="M1 10L9 2L17 10" fill="none" stroke="#222" strokeWidth="1.500" /></svg>
          <Gap $w={10} />
          <svg width="22" height="22" viewBox="0 0 22 22"><path d="M2 10A9 9 0 0118 5.500M19 1V6.500H13.500M2 21V15.500H7.500M3 16Q5 19 9 20" fill="none" stroke="#222" strokeWidth="1.400" /><circle cx="16" cy="16" r="5.200" fill="#ff9800" /></svg>
          <Gap $w={14} />
          <TrayText $w={34} $align="center">ENG<br />US</TrayText>
          <Gap $w={20} />
          <svg width="22" height="20" viewBox="0 0 22 20" fill="none" stroke="#222" strokeWidth="1.500"><path d="M2 8Q11 -1 20 8M4.500 11Q11 4.500 17.500 11M7.500 14Q11 10.500 14.500 14" /><circle cx="11" cy="16.500" r="1.500" fill="#222" stroke="none" /></svg>
          <Gap $w={8} />
          <svg width="21" height="18" viewBox="0 0 21 18" fill="none"><path d="M1 6H4L8.500 2V16L4 12H1Z" stroke="#333" strokeWidth="1.300" /><path d="M11 6Q13 9 11 12M14 4Q17 9 14 14M17 2Q21 9 17 16" stroke="#a9a194" strokeWidth="1.200" /></svg>
          <Gap $w={9} />
          <svg width="21" height="18" viewBox="0 0 21 18"><rect x="4" y="4.500" width="13.500" height="10" rx="1.500" fill="none" stroke="#222" strokeWidth="1.500" /><path d="M6.500 7H15.500V12.500H6.500Z" fill="#111" /><path d="M18.500 7.500H20V11.500H18.500Z" fill="#222" /><path d="M0 3H7V6Q7 8 4.500 8V15H2.500V8Q0 8 0 6Z" fill="#222" /><path d="M1.500 0V3M5.500 0V3" stroke="#222" strokeWidth="1.300" /></svg>
          <Gap $w={1} />
          <TrayText $w={95} $align="right">10:36<DateLine>22-09-2022</DateLine></TrayText>
          <Badge>1</Badge>
        </Tray>
      </TaskBar>
    </Screen>
  );
}
